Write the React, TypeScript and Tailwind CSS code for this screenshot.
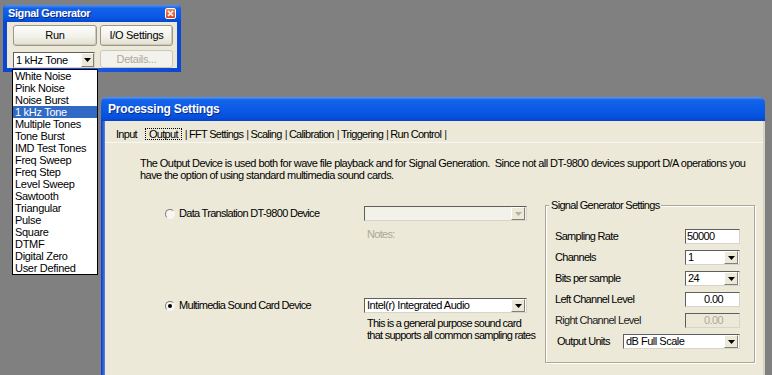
import React from "react";

const FONT = "font-['Liberation_Sans',Arial,sans-serif]";

function ArrowBtn({ disabled }: { disabled?: boolean }) {
  return (
    <div className="w-[14px] h-[13px] m-px flex items-center justify-center bg-[#ece9d8] border border-t-white border-l-white border-r-[#808080] border-b-[#808080]">
      <svg width="7" height="4" viewBox="0 0 7 4">
        <path d="M0 0H7L3.5 4Z" fill={disabled ? "#b5b2a3" : "#000"} />
      </svg>
    </div>
  );
}

function Combo({ text, w, disabled }: { text: string; w: string; disabled?: boolean }) {
  return (
    <div
      className={`${w} h-[15px] flex items-center justify-between border border-t-[#5e5e5e] border-l-[#5e5e5e] border-r-[#d8d5c8] border-b-[#d8d5c8] ${
        disabled ? "bg-[#f2f1ea]" : "bg-white"
      }`}
    >
      <span className="pl-[2px] text-[11px] leading-none tracking-[-0.5px] text-black whitespace-nowrap">{text}</span>
      <ArrowBtn disabled={disabled} />
    </div>
  );
}

function Input({ text, disabled, center }: { text: string; disabled?: boolean; center?: boolean }) {
  return (
    <div
      className={`w-[55px] h-[15px] flex items-center border border-t-[#5e5e5e] border-l-[#5e5e5e] border-r-[#d8d5c8] border-b-[#d8d5c8] ${
        disabled ? "bg-[#ece9d8] text-[#aca899]" : "bg-white text-black"
      } ${center ? "justify-center pl-[2px]" : "pl-[1px]"}`}
    >
      <span className="text-[11px] leading-none tracking-[-0.6px]">{text}</span>
    </div>
  );
}

function Radio({ checked }: { checked?: boolean }) {
  return (
    <div className="w-[10px] h-[10px] rounded-full border border-t-[#7a7a7a] border-l-[#7a7a7a] border-r-[#f6f6f2] border-b-[#f6f6f2] flex items-center justify-center bg-[#f7f6f1]">
      {checked && <div className="w-[4px] h-[4px] rounded-full bg-black" />}
    </div>
  );
}

function Sep() {
  return <span className="ml-[3px] mr-[2px] text-[#222]">|</span>;
}

const listItems = [
  "White Noise",
  "Pink Noise",
  "Noise Burst",
  "1 kHz Tone",
  "Multiple Tones",
  "Tone Burst",
  "IMD Test Tones",
  "Freq Sweep",
  "Freq Step",
  "Level Sweep",
  "Sawtooth",
  "Triangular",
  "Pulse",
  "Square",
  "DTMF",
  "Digital Zero",
  "User Defined",
];

export default function App() {
  return (
    <div className={`relative w-[772px] h-[375px] overflow-hidden bg-[#808080] ${FONT}`}>
      {/* Processing Settings window */}
      <div className="absolute left-[101px] top-[97px] w-[664px] h-[290px] flex flex-col">
        <div className="h-[24px] rounded-t-[6px] bg-[linear-gradient(to_bottom,#5a9cf8_0%,#1563ea_12%,#0a5ae6_55%,#0650de_85%,#0442c8_100%)] flex items-center pl-[7px]">
          <span className="text-white font-bold text-[12px] tracking-[-0.2px] [text-shadow:1px_1px_0_#0a2a8a]">
            Processing Settings
          </span>
        </div>
        <div className="flex-1 flex">
          <div className="w-[4px] bg-[linear-gradient(to_right,#0a3ccc,#2d62db_60%,#5b86e0)]" />
          <div className="flex-1 bg-[#ece9d8] border-r-[2px] border-r-[#d8d4c4] text-[11px] leading-none tracking-[-0.7px] text-black">
            {/* tabs */}
            <div className="pt-[6px] pl-[11px] h-[20px] flex items-center whitespace-nowrap">
              <span>Input</span>
              <span className="ml-[8px] px-[3px] h-[12px] flex items-center border border-dotted border-black">Output</span>
              <Sep />
              <span>FFT Settings</span>
              <Sep />
              <span>Scaling</span>
              <Sep />
              <span>Calibration</span>
              <Sep />
              <span>Triggering</span>
              <Sep />
              <span>Run Control</span>
              <Sep />
            </div>
            <div className="h-px mt-px bg-[#f7f6f0]" />
            {/* description */}
            <div className="mt-[14px] pl-[35px] leading-[12px] whitespace-nowrap tracking-[-0.55px]">
              <div>
                The Output Device is used both for wave file playback and for Signal Generation.{"\u00a0 "}Since not all
                DT-9800 devices support D/A operations you
              </div>
              <div>have the option of using standard multimedia sound cards.</div>
            </div>
            {/* main */}
            <div className="mt-[17px] flex">
              <div className="w-[440px] flex flex-col">
                <div className="mt-[8px] h-[15px] flex items-center pl-[60px]">
                  <Radio />
                  <span className="ml-[4px] w-[185px] whitespace-nowrap">Data Translation DT-9800 Device</span>
                  <Combo text="" w="w-[163px]" disabled />
                </div>
                <div className="mt-[8px] h-[11px] pl-[262px] flex items-center text-[#aca899]">Notes:</div>
                <div className="mt-[58px] h-[15px] flex items-center pl-[60px]">
                  <Radio checked />
                  <span className="ml-[4px] w-[185px] whitespace-nowrap">Multimedia Sound Card Device</span>
                  <Combo text="Intel(r) Integrated Audio" w="w-[163px]" />
                </div>
                <div className="mt-[4px] pl-[262px] leading-[12px] whitespace-nowrap tracking-[-0.75px]">
                  <div>This is a general purpose sound card</div>
                  <div>that supports all common sampling rates</div>
                </div>
              </div>
              {/* group box */}
              <div className="relative mt-[7px] w-[210px] h-[158px] border border-[#a9a696] shadow-[inset_1px_1px_0_#ffffff,1px_1px_0_#ffffff]">
                <span className="absolute -top-[6px] left-[3px] px-[2px] bg-[#ece9d8] whitespace-nowrap">
                  Signal Generator Settings
                </span>
                <div className="pt-[23px] pl-[9px] pr-[14px] flex flex-col gap-[6px]">
                  <div className="h-[15px] flex items-center justify-between">
                    <span>Sampling Rate</span>
                    <Input text="50000" />
                  </div>
                  <div className="h-[15px] flex items-center justify-between">
                    <span>Channels</span>
                    <Combo text="1" w="w-[55px]" />
                  </div>
                  <div className="h-[15px] flex items-center justify-between">
                    <span>Bits per sample</span>
                    <Combo text="24" w="w-[55px]" />
                  </div>
                  <div className="h-[15px] flex items-center justify-between">
                    <span>Left Channel Level</span>
                    <Input text="0.00" center />
                  </div>
                  <div className="h-[15px] flex items-center justify-between">
                    <span className="text-[#222]">Right Channel Level</span>
                    <Input text="0.00" center disabled />
                  </div>
                  <div className="h-[15px] flex items-center justify-between">
                    <span className="ml-[2px]">Output Units</span>
                    <Combo text="dB Full Scale" w="w-[117px]" />
                  </div>
                </div>
              </div>
            </div>
          </div>
        </div>
      </div>

      {/* Signal Generator window */}
      <div className="absolute left-[3px] top-[5px] w-[178px] h-[67px] flex flex-col rounded-t-[4px] bg-[linear-gradient(to_right,#0b46d2,#1a5ae0_50%,#0b46d2)]">
        <div className="h-[17px] rounded-t-[4px] bg-[linear-gradient(to_bottom,#4a92f6_0%,#1462ea_20%,#0a58e4_70%,#0548d2_100%)] flex items-center justify-between pl-[5px] pr-[5px]">
          <span className="text-white font-bold text-[11px] tracking-[-0.4px] leading-none [text-shadow:1px_1px_0_#0a2a8a]">
            Signal Generator
          </span>
          <div className="w-[11px] h-[11px] rounded-[2px] border border-white bg-[linear-gradient(to_bottom,#f08a68,#d8431c)] flex items-center justify-center">
            <svg width="7" height="7" viewBox="0 0 7 7">
              <path d="M1 1L6 6M6 1L1 6" stroke="#fff" strokeWidth="1.6" />
            </svg>
          </div>
        </div>
        <div className="flex-1 px-[4px] pb-[4px]">
          <div className="h-full bg-[#ece9d8] pt-[3px] pl-[6px] text-[11px] leading-none tracking-[-0.3px] text-black">
            <div className="flex gap-[3px]">
              <div className="w-[84px] h-[21px] flex items-center justify-center rounded-[3px] border border-[#9a978a] bg-[linear-gradient(to_bottom,#fdfdfb,#f2f1ea_55%,#e2dfd0)] shadow-[inset_-1px_-1px_0_#cfcbbb]">
                Run
              </div>
              <div className="w-[73px] h-[21px] flex items-center justify-center rounded-[3px] border border-[#9a978a] bg-[linear-gradient(to_bottom,#fdfdfb,#f2f1ea_55%,#e2dfd0)] shadow-[inset_-1px_-1px_0_#cfcbbb]">
                I/O Settings
              </div>
            </div>
            <div className="mt-[4px] flex gap-[5px] items-start">
              <div className="mt-[2px] w-[82px] h-[16px] flex items-center justify-between bg-white border border-t-[#5e5e5e] border-l-[#5e5e5e] border-r-[#d8d5c8] border-b-[#d8d5c8]">
                <span className="pl-[2px]">1 kHz Tone</span>
                <div className="w-[13px] h-[14px] flex items-center justify-center bg-[#ece9d8] border border-t-white border-l-white border-r-[#808080] border-b-[#808080]">
                  <svg width="7" height="4" viewBox="0 0 7 4">
                    <path d="M0 0H7L3.5 4Z" fill="#000" />
                  </svg>
                </div>
              </div>
              <div className="w-[73px] h-[18px] flex items-center justify-center rounded-[3px] border border-[#cbc8b9] bg-[#f3f2ec] text-[#aca899]">
                Details...
              </div>
            </div>
          </div>
        </div>
      </div>

      {/* Dropdown list */}
      <div className="absolute left-[12px] top-[69px] w-[86px] border border-black bg-white text-[11px] tracking-[-0.3px] text-black">
        {listItems.map((it) => (
          <div
            key={it}
            className={`h-[12px] leading-[12px] pl-[2px] whitespace-nowrap ${
              it === "1 kHz Tone" ? "bg-[#316ac5] text-white" : ""
            }`}
          >
            {it}
          </div>
        ))}
      </div>
    </div>
  );
}
